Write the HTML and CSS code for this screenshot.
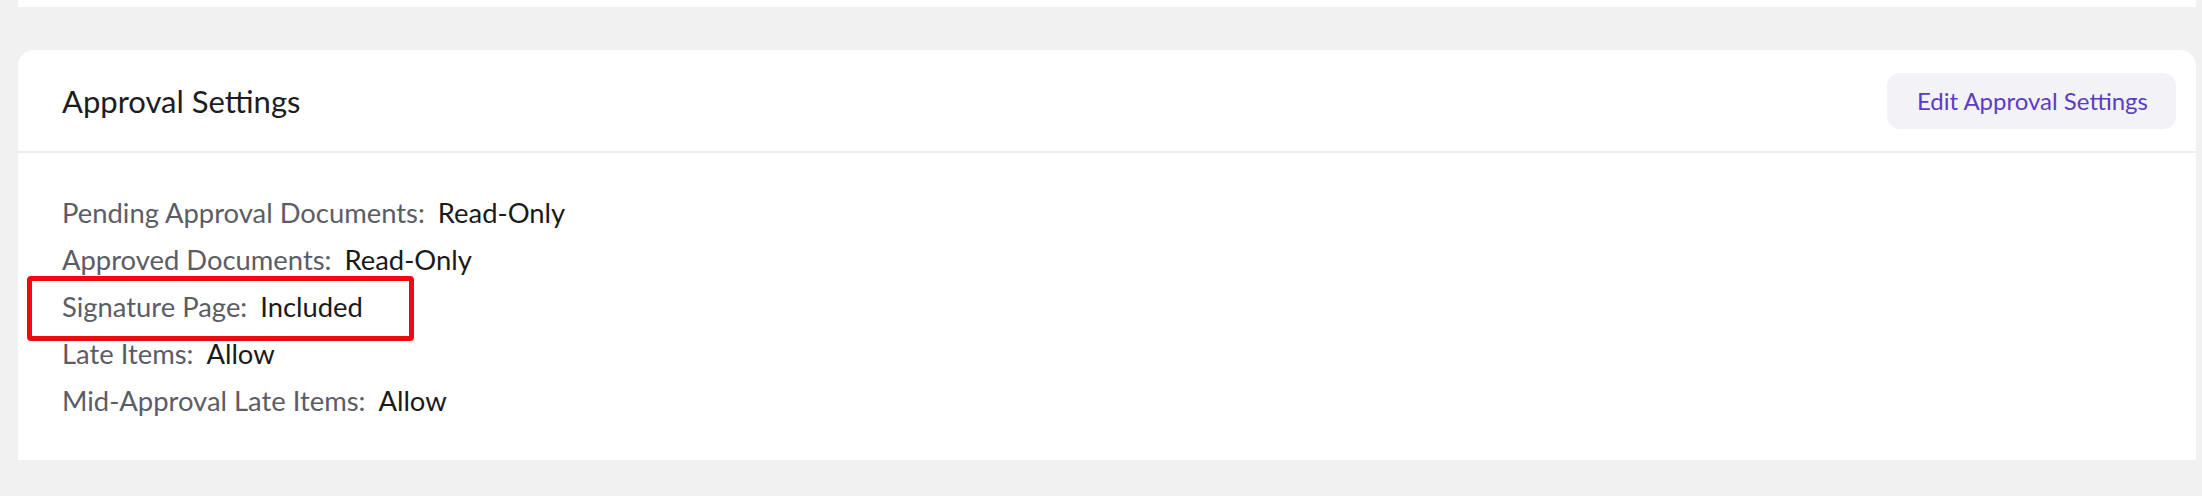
FILE: index.html
```html
<!DOCTYPE html>
<html lang="en">
<head>
<meta charset="utf-8">
<title>Approval Settings</title>
<link rel="stylesheet" href="styles.css">
</head>
<body>
<div class="page">
  <div class="card card-top"></div>
  <section class="card card-settings">
    <header class="card-header">
      <h2 class="card-title">Approval Settings</h2>
      <button class="btn-edit" type="button">Edit Approval Settings</button>
    </header>
    <div class="card-body">
      <div class="setting-row"><span class="label">Pending Approval Documents:</span><span class="value">Read-Only</span></div>
      <div class="setting-row"><span class="label">Approved Documents:</span><span class="value">Read-Only</span></div>
      <div class="setting-row highlighted"><span class="label">Signature Page:</span><span class="value">Included</span><span class="highlight-box"></span></div>
      <div class="setting-row"><span class="label">Late Items:</span><span class="value">Allow</span></div>
      <div class="setting-row"><span class="label">Mid-Approval Late Items:</span><span class="value">Allow</span></div>
    </div>
  </section>
</div>
</body>
</html>
```

FILE: styles.css
```css
* { box-sizing: border-box; }

html, body {
  margin: 0;
  padding: 0;
  background: #f1f1f1;
  font-family: Lato, "Noto Sans", "Liberation Sans", sans-serif;
}

.page {
  padding: 0 6px 0 18px;
  display: flex;
  flex-direction: column;
  gap: 43px;
}

.card {
  background: #ffffff;
}

.card-top {
  height: 7px;
}

.card-settings {
  border-radius: 16px 16px 0 0;
}

.card-header {
  height: 103px;
  display: flex;
  align-items: center;
  justify-content: space-between;
  padding: 0 20px 0 44px;
  border-bottom: 2px solid #eeeeee;
}

.card-title {
  margin: 0;
  font-size: 31px;
  font-weight: 400;
  line-height: 36px;
  color: #1d1d1f;
}

.btn-edit {
  height: 56px;
  padding: 0 28px 0 30px;
  border: none;
  border-radius: 13px;
  background: #f3f2f7;
  color: #5a3dc2;
  font-family: Lato, "Noto Sans", "Liberation Sans", sans-serif;
  font-size: 24px;
  line-height: 30px;
}

.card-body {
  padding: 36px 44px 36px;
}

.setting-row {
  position: relative;
  font-size: 27.4px;
  line-height: 47px;
}

.label {
  color: #5c5c66;
}

.value {
  color: #1a1a1a;
  margin-left: 13px;
}

.highlight-box {
  position: absolute;
  left: -35px;
  top: -7px;
  width: 387px;
  height: 65px;
  border: 5px solid #ee0a0f;
  border-radius: 4px;
}
```
